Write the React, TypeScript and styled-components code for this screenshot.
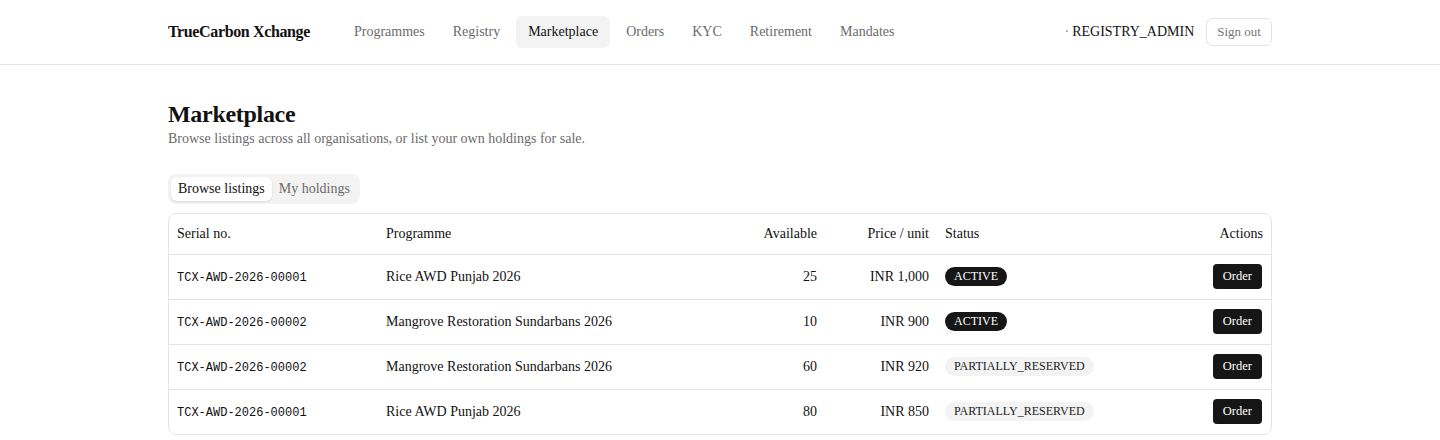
import React from "react";
import styled, { createGlobalStyle } from "styled-components";

const Global = createGlobalStyle`
  html, body { margin: 0; padding: 0; background: #fff; }
  body { font-family: "Liberation Serif", "Times New Roman", serif; color: #111; }
  * { box-sizing: border-box; }
`;

const Header = styled.header`
  height: 65px;
  border-bottom: 1px solid #e5e5e5;
`;

const HeaderInner = styled.div`
  max-width: 1104px;
  margin: 0 auto;
  height: 64px;
  display: flex;
  align-items: center;
`;

const Brand = styled.div`
  font-weight: 700;
  font-size: 16px;
  letter-spacing: -0.37px;
  margin-right: 32px;
  color: #111;
`;

const Nav = styled.nav`
  display: flex;
  align-items: center;
  gap: 4px;
`;

const NavItem = styled.a<{ $active?: boolean }>`
  font-size: 14px;
  padding: 8px 12px;
  border-radius: 6px;
  color: ${(p) => (p.$active ? "#111" : "#6b6b6b")};
  background: ${(p) => (p.$active ? "#f3f3f3" : "transparent")};
  line-height: 16px;
  cursor: pointer;
`;

const Right = styled.div`
  margin-left: auto;
  display: flex;
  align-items: center;
  gap: 12px;
`;

const Role = styled.span`
  font-size: 14px;
  color: #111;
`;

const Dot = styled.span`
  color: #888;
  margin-right: 3px;
`;

const SignOut = styled.button`
  font-family: inherit;
  font-size: 13px;
  color: #777;
  background: #fff;
  border: 1px solid #e5e5e5;
  border-radius: 6px;
  height: 28px;
  padding: 0 10px;
`;

const Main = styled.main`
  max-width: 1104px;
  margin: 0 auto;
  padding-top: 35px;
`;

const Title = styled.h1`
  font-size: 24px;
  font-weight: 700;
  margin: 0;
  line-height: 28px;
  letter-spacing: -0.3px;
`;

const Subtitle = styled.p`
  margin: 2px 0 0;
  font-size: 14px;
  color: #6b6b6b;
  line-height: 18px;
`;

const Tabs = styled.div`
  margin-top: 26px;
  display: inline-flex;
  padding: 3px;
  background: #f3f3f3;
  border-radius: 8px;
`;

const Tab = styled.button<{ $active?: boolean }>`
  font-family: inherit;
  font-size: 14px;
  border: none;
  border-radius: 6px;
  padding: 0 7px;
  height: 24px;
  background: ${(p) => (p.$active ? "#fff" : "transparent")};
  color: ${(p) => (p.$active ? "#111" : "#6b6b6b")};
  box-shadow: ${(p) => (p.$active ? "0 1px 2px rgba(0,0,0,0.12)" : "none")};
`;

const TableWrap = styled.div`
  margin-top: 9px;
  border: 1px solid #e5e5e5;
  border-radius: 8px;
  overflow: hidden;
`;

const Table = styled.table`
  width: 100%;
  border-collapse: collapse;
  table-layout: fixed;
  font-size: 14px;
`;

const Th = styled.th<{ $right?: boolean; $w: number }>`
  width: ${(p) => p.$w}px;
  font-weight: 400;
  text-align: ${(p) => (p.$right ? "right" : "left")};
  padding: 0 8px;
  height: 40px;
  border-bottom: 1px solid #e5e5e5;
  color: #111;
`;

const Td = styled.td<{ $right?: boolean }>`
  text-align: ${(p) => (p.$right ? "right" : "left")};
  padding: 0 8px;
  height: 45px;
  color: #111;
`;

const Tr = styled.tr`
  & + & td { border-top: 1px solid #e5e5e5; }
`;

const Mono = styled.span`
  font-family: "Liberation Mono", "DejaVu Sans Mono", monospace;
  font-size: 12px;
`;

const Badge = styled.span<{ $dark?: boolean }>`
  display: inline-block;
  font-size: 12px;
  line-height: 19px;
  height: 19px;
  padding: 0 9px;
  border-radius: 999px;
  background: ${(p) => (p.$dark ? "#161616" : "#f3f3f3")};
  color: ${(p) => (p.$dark ? "#fff" : "#222")};
`;

const OrderBtn = styled.button`
  font-family: inherit;
  font-size: 12.5px;
  background: #161616;
  color: #fff;
  border: none;
  border-radius: 4px;
  height: 25px;
  padding: 0 10px;
  margin-right: 1px;
`;

const rows = [
  { serial: "TCX-AWD-2026-00001", prog: "Rice AWD Punjab 2026", avail: 25, price: "INR 1,000", status: "ACTIVE" },
  { serial: "TCX-AWD-2026-00002", prog: "Mangrove Restoration Sundarbans 2026", avail: 10, price: "INR 900", status: "ACTIVE" },
  { serial: "TCX-AWD-2026-00002", prog: "Mangrove Restoration Sundarbans 2026", avail: 60, price: "INR 920", status: "PARTIALLY_RESERVED" },
  { serial: "TCX-AWD-2026-00001", prog: "Rice AWD Punjab 2026", avail: 80, price: "INR 850", status: "PARTIALLY_RESERVED" },
];

const navItems = ["Programmes", "Registry", "Marketplace", "Orders", "KYC", "Retirement", "Mandates"];

export default function App() {
  return (
    <>
      <Global />
      <Header>
        <HeaderInner>
          <Brand>TrueCarbon Xchange</Brand>
          <Nav>
            {navItems.map((n) => (
              <NavItem key={n} $active={n === "Marketplace"}>{n}</NavItem>
            ))}
          </Nav>
          <Right>
            <Role><Dot>·</Dot>REGISTRY_ADMIN</Role>
            <SignOut>Sign out</SignOut>
          </Right>
        </HeaderInner>
      </Header>
      <Main>
        <Title>Marketplace</Title>
        <Subtitle>Browse listings across all organisations, or list your own holdings for sale.</Subtitle>
        <Tabs>
          <Tab $active>Browse listings</Tab>
          <Tab>My holdings</Tab>
        </Tabs>
        <TableWrap>
          <Table>
            <thead>
              <tr>
                <Th $w={209}>Serial no.</Th>
                <Th $w={347}>Programme</Th>
                <Th $w={100} $right>Available</Th>
                <Th $w={112} $right>Price / unit</Th>
                <Th $w={200}>Status</Th>
                <Th $w={134} $right>Actions</Th>
              </tr>
            </thead>
            <tbody>
              {rows.map((r, i) => (
                <Tr key={i}>
                  <Td><Mono>{r.serial}</Mono></Td>
                  <Td>{r.prog}</Td>
                  <Td $right>{r.avail}</Td>
                  <Td $right>{r.price}</Td>
                  <Td><Badge $dark={r.status === "ACTIVE"}>{r.status}</Badge></Td>
                  <Td $right><OrderBtn>Order</OrderBtn></Td>
                </Tr>
              ))}
            </tbody>
          </Table>
        </TableWrap>
      </Main>
    </>
  );
}
